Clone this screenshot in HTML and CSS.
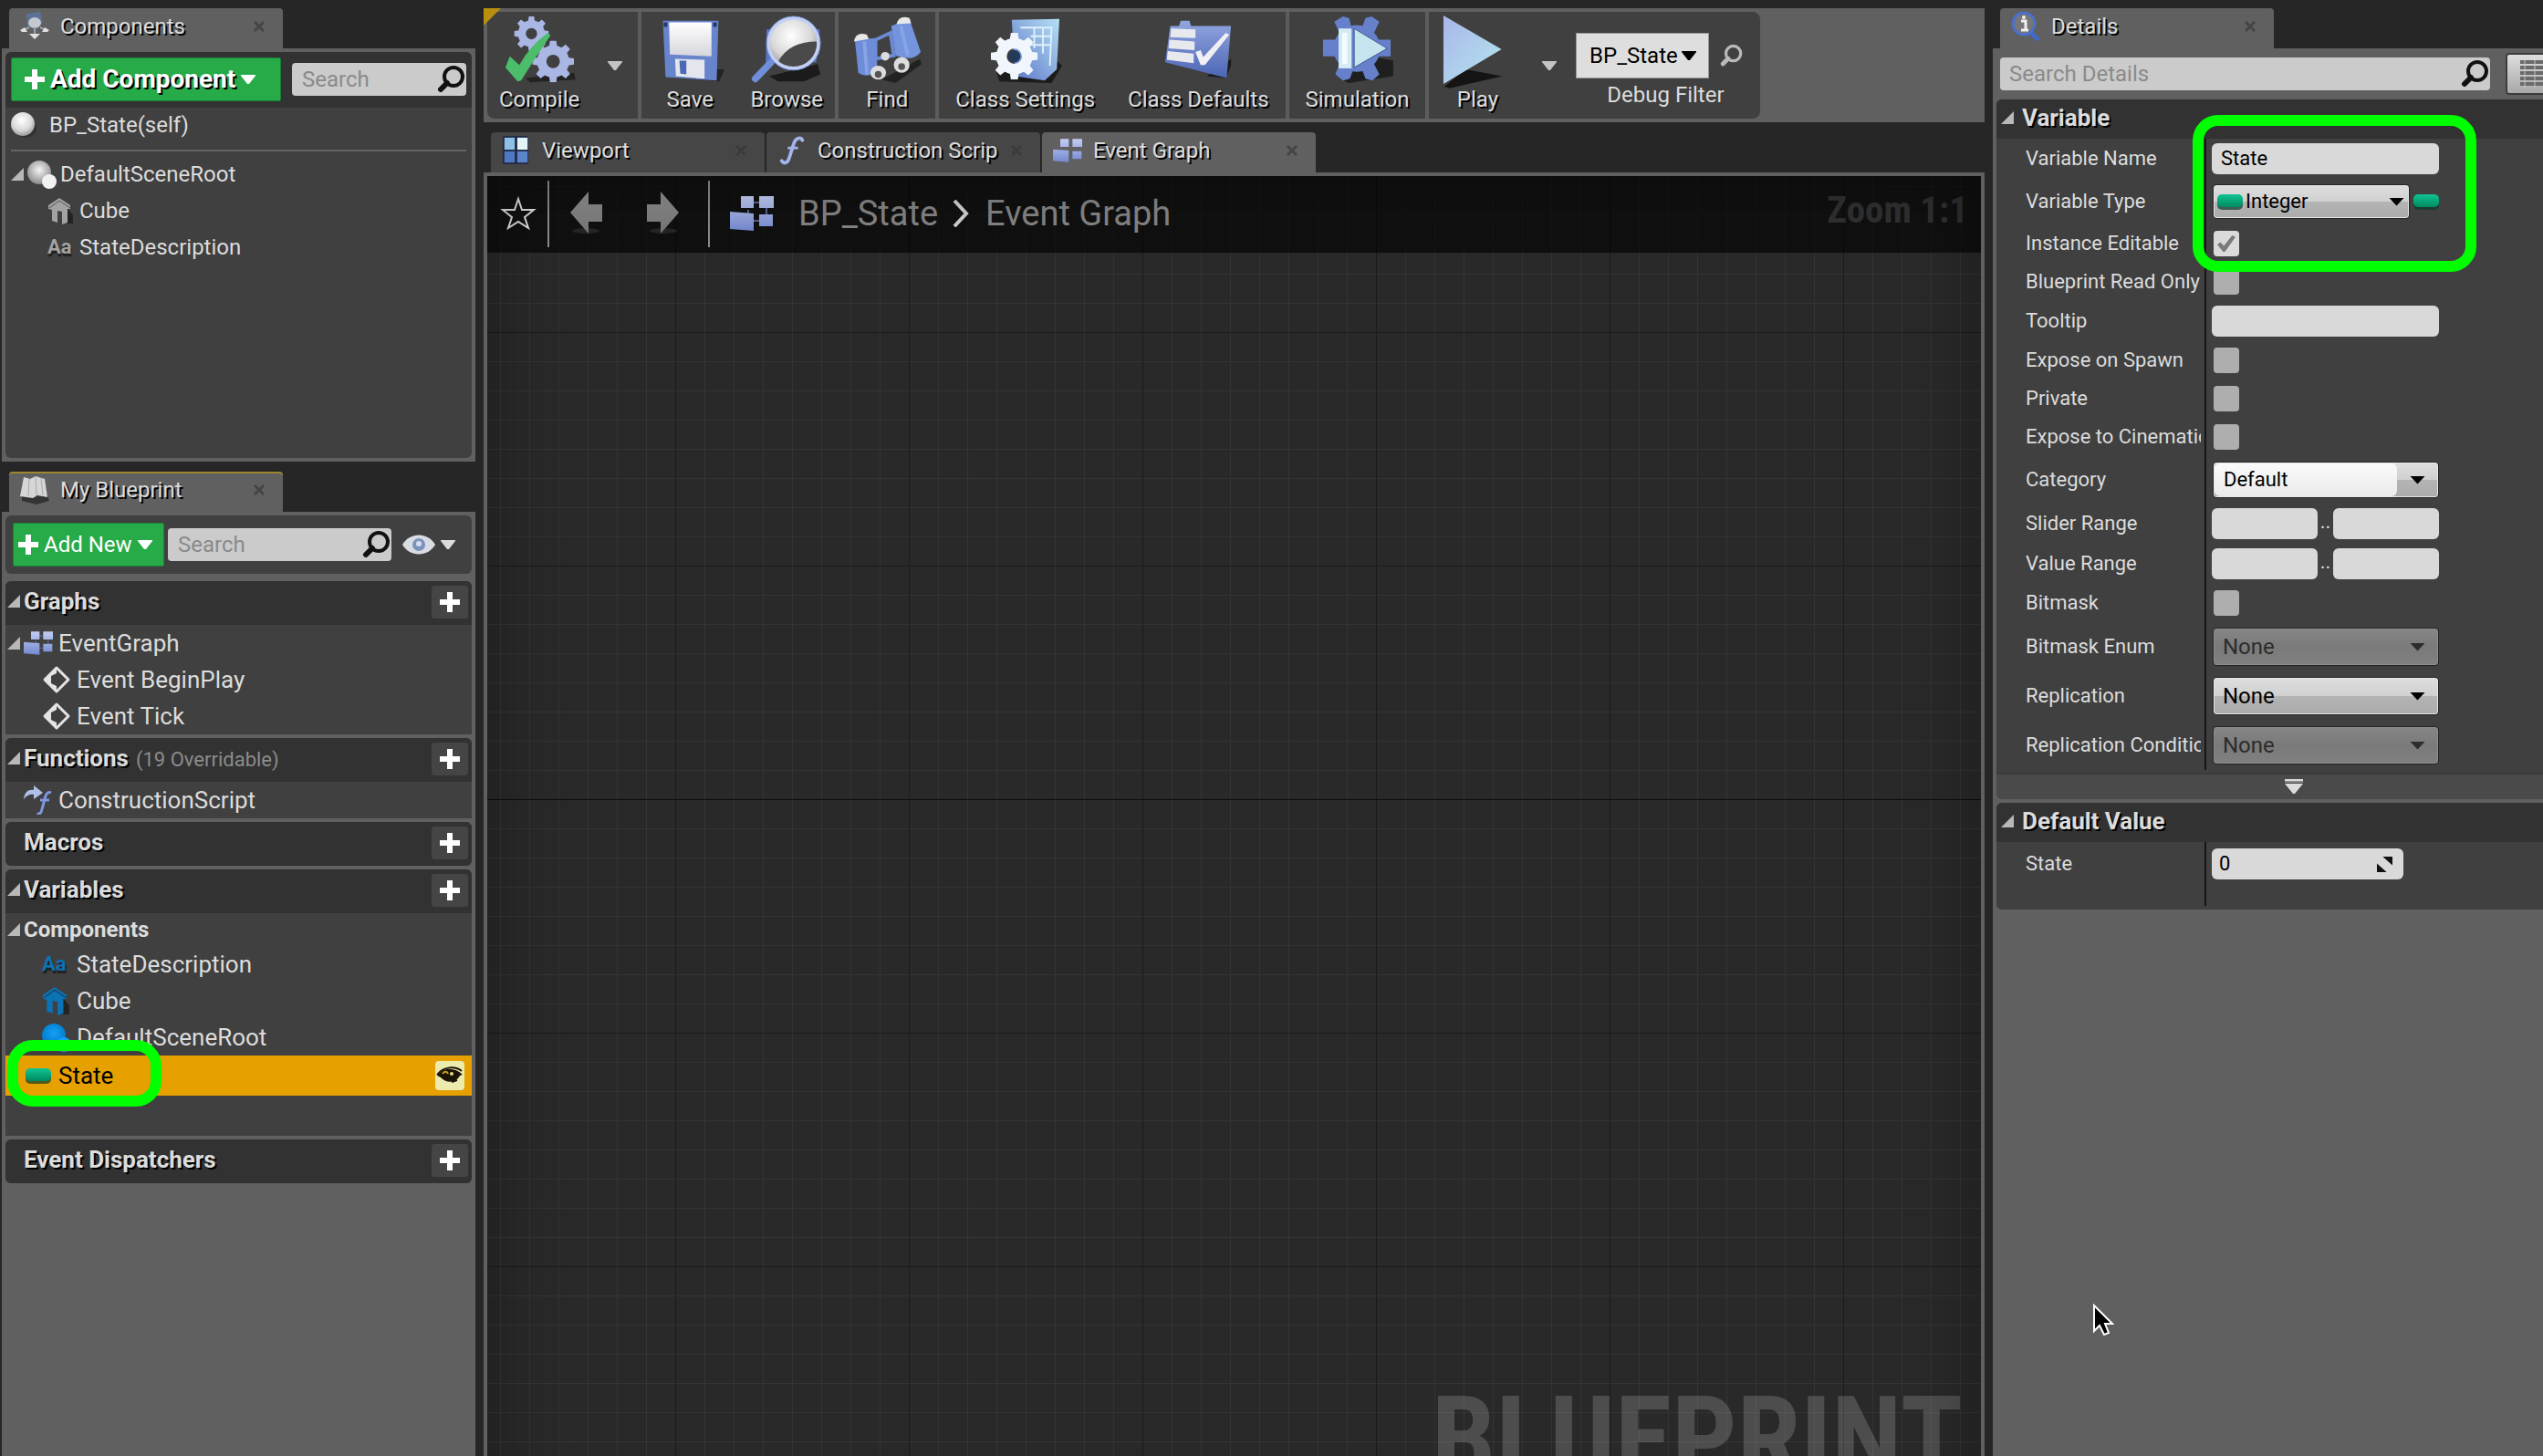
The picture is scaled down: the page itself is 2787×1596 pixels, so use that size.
FILE: index.html
```html
<!DOCTYPE html>
<html lang="en">
<head>
<meta charset="utf-8">
<title>BP_State - Blueprint Editor</title>
<link rel="stylesheet" href="styles.css">
</head>
<body>
<svg class="defs" aria-hidden="true">
  <defs>
    <linearGradient id="g-blue" x1="0" y1="0" x2="0" y2="1"><stop offset="0" stop-color="#c3cdf3"/><stop offset="1" stop-color="#7488cf"/></linearGradient>
    <linearGradient id="g-deep" x1="0" y1="0" x2="0" y2="1"><stop offset="0" stop-color="#91a5e0"/><stop offset="1" stop-color="#4d66b4"/></linearGradient>
    <linearGradient id="g-cyan" x1="0" y1="1" x2="1" y2="0"><stop offset="0" stop-color="#5b74c8"/><stop offset="1" stop-color="#b5e0f4"/></linearGradient>
    <linearGradient id="g-play" x1="0" y1="0" x2="1" y2="1"><stop offset="0" stop-color="#a9b6ea"/><stop offset="1" stop-color="#b4e6ee"/></linearGradient>
    <linearGradient id="g-white" x1="0" y1="0" x2="0" y2="1"><stop offset="0" stop-color="#ffffff"/><stop offset="1" stop-color="#d5d6dc"/></linearGradient>
    <linearGradient id="g-grey" x1="0" y1="0" x2="0" y2="1"><stop offset="0" stop-color="#8f8f8f"/><stop offset="1" stop-color="#767676"/></linearGradient>
    <linearGradient id="g-pin" x1="0" y1="0" x2="0" y2="1"><stop offset="0" stop-color="#10c492"/><stop offset="1" stop-color="#008a60"/></linearGradient>
    <radialGradient id="g-ball" cx=".45" cy=".35" r=".7"><stop offset="0" stop-color="#ffffff"/><stop offset=".6" stop-color="#d8d8d8"/><stop offset="1" stop-color="#8c8c8c"/></radialGradient>
    <radialGradient id="g-ball2" cx=".5" cy=".4" r=".6"><stop offset="0" stop-color="#f4f4f4"/><stop offset="1" stop-color="#8a8a8a"/></radialGradient>
    <radialGradient id="g-ball3" cx=".5" cy=".4" r=".6"><stop offset="0" stop-color="#14a0f8"/><stop offset="1" stop-color="#0078c4"/></radialGradient>
    <symbol id="i-gear" viewBox="-20 -20 40 40">
      <circle r="11" fill="none" stroke="currentColor" stroke-width="9"/>
      <g fill="currentColor"><path id="tooth" d="M-4-13L-3-20H3L4-13Z"/><use href="#tooth" transform="rotate(45)"/><use href="#tooth" transform="rotate(90)"/><use href="#tooth" transform="rotate(135)"/><use href="#tooth" transform="rotate(180)"/><use href="#tooth" transform="rotate(225)"/><use href="#tooth" transform="rotate(270)"/><use href="#tooth" transform="rotate(315)"/></g>
    </symbol>
    <symbol id="i-search" viewBox="0 0 32 32"><circle cx="18" cy="13" r="10" fill="none" stroke="currentColor" stroke-width="4"/><path d="M11 20L4 27" stroke="currentColor" stroke-width="6" stroke-linecap="round"/></symbol>
    <symbol id="i-plus" viewBox="0 0 22 22"><path d="M8 0h6v8h8v6h-8v8H8v-8H0V8h8z" fill="currentColor"/></symbol>
    <symbol id="i-close" viewBox="0 0 12 12"><path d="M1 1L11 11M11 1L1 11" stroke="#343434" stroke-width="3"/></symbol>
    <symbol id="i-down" viewBox="0 0 16 10"><path d="M0 0H16V1L9 10H7L0 1Z" fill="currentColor"/></symbol>
    <symbol id="i-tri" viewBox="0 0 14 14"><path d="M14 0V14H0Z" fill="#b8b8b8"/></symbol>
    <symbol id="i-graph" viewBox="0 0 48 40"><path d="M14 8H40M40 8V28M20 16V28H40" fill="none" stroke="#56618c" stroke-width="2"/><path d="M12 1H26V14H12ZM32 1H48V14H32ZM0 18L26 20V39L0 37ZM32 21H47V34H32Z" fill="url(#g-blue)"/></symbol>
    <symbol id="i-house" viewBox="0 0 30 30"><path d="M20 10L28 20V29H20Z" fill="#000" opacity=".45"/><path d="M13 1L25 9V13L22 13V28L16 30V16L11 15V28L5 26V14L1 13V9Z" fill="currentColor"/><path d="M2 12L13 4L25 12" fill="none" stroke="#222" stroke-opacity=".6" stroke-width="1"/></symbol>
    <symbol id="i-event" viewBox="0 0 32 32"><path d="M16 3L29 16L16 29L3 16Z" fill="none" stroke="#e4e4e4" stroke-width="3" stroke-linejoin="round"/><path d="M16 3V9L10 12V20L16 23V29L3 16Z" fill="#e4e4e4"/></symbol>
    <symbol id="i-pin" viewBox="0 0 28 18"><rect x="0" y="3" width="28" height="15" rx="5" fill="#0c3a2c" opacity=".7"/><rect x="0" y="1" width="28" height="14" rx="5" fill="url(#g-pin)"/></symbol>
    <symbol id="i-arrow" viewBox="0 0 36 48"><ellipse cx="18" cy="43" rx="15" ry="3" fill="#333" opacity=".6"/><path d="M0 14H15V0L35 23L15 46V33H0Z" fill="url(#g-grey)"/></symbol>
    <symbol id="i-func" viewBox="0 0 28 34"><path d="M26 5C24 1 18 2 16 9L11 25C9 32 5 33 2 29" fill="none" stroke="#a3b4ea" stroke-width="4" stroke-linecap="round"/><path d="M9 14H21" stroke="#a3b4ea" stroke-width="3"/></symbol>
    <symbol id="i-eye" viewBox="0 0 36 22"><path d="M0 11C8-3 28-3 36 11C28 25 8 25 0 11Z" fill="#d9dce3"/><circle cx="18" cy="11" r="7" fill="#7d93bd"/><circle cx="18" cy="10" r="3" fill="#d5def0"/></symbol>
  </defs>
</svg>

<div class="editor">
  <aside class="side">
    <section class="dock dock-components">
      <div class="tabs">
        <div class="tab active">
          <svg class="tab-icon" viewBox="0 0 32 32"><path d="M7 2L22 0L25 12L18 18L8 16Z" fill="#5b7195"/><ellipse cx="16" cy="12" rx="7" ry="6" fill="#c4c8cf"/><path d="M4 20L10 17M28 20L22 17M16 17V26" stroke="#9aa0ab" stroke-width="2"/><path d="M0 20L5 17L8 22L2 22ZM32 20L27 17L24 22L30 22ZM10 24H22L16 30Z" fill="#e0e0e0"/></svg>
          <span class="tab-text">Components</span>
          <svg class="tab-close"><use href="#i-close"/></svg>
        </div>
      </div>
      <div class="panel">
        <div class="comp-bar">
          <button class="green big"><svg class="plus"><use href="#i-plus"/></svg>Add Component<svg class="down"><use href="#i-down"/></svg></button>
          <label class="search"><input type="text" placeholder="Search" aria-label="Search components"><svg class="glass"><use href="#i-search"/></svg></label>
        </div>
        <div class="comp-tree">
          <div class="self-row"><svg class="ico30" viewBox="0 0 30 30"><ellipse cx="16" cy="19" rx="12" ry="10" fill="#222" opacity=".5"/><circle cx="13" cy="14" r="13" fill="url(#g-ball)"/></svg>BP_State(self)</div>
          <div class="rule"></div>
          <div class="row root"><svg class="tri"><use href="#i-tri"/></svg><svg class="ico32" viewBox="0 0 32 32"><circle cx="13" cy="14" r="13" fill="url(#g-ball2)"/><circle cx="24" cy="24" r="8" fill="#f2f2f2"/></svg>DefaultSceneRoot</div>
          <div class="row leaf"><svg class="ico30 grey"><use href="#i-house"/></svg>Cube</div>
          <div class="row leaf"><span class="aa grey">Aa</span>StateDescription</div>
        </div>
      </div>
    </section>

    <section class="dock dock-blueprint">
      <div class="tabs">
        <div class="tab active focused">
          <svg class="tab-icon" viewBox="0 0 32 32"><path d="M2 22L30 22L32 28L18 32L2 28Z" fill="#222" opacity=".7"/><path d="M4 2L11 4L17 1L27 4L30 24L19 22L14 25L0 23Z" fill="#d6d6d6"/><path d="M10 4L9 23M17 2L18 22M23 3L25 22" stroke="#a8a8a8" stroke-width="1"/></svg>
          <span class="tab-text">My Blueprint</span>
          <svg class="tab-close"><use href="#i-close"/></svg>
        </div>
      </div>
      <div class="panel list">
        <div class="bp-bar">
          <button class="green"><svg class="plus"><use href="#i-plus"/></svg>Add New<svg class="down"><use href="#i-down"/></svg></button>
          <label class="search"><input type="text" placeholder="Search" aria-label="Search blueprint"><svg class="glass"><use href="#i-search"/></svg></label>
          <button class="plain" aria-label="View options"><svg class="eye"><use href="#i-eye"/></svg><svg class="down"><use href="#i-down"/></svg></button>
        </div>

        <div class="group">
          <h2 class="group-head"><svg class="tri"><use href="#i-tri"/></svg>Graphs<button class="add" aria-label="Add graph"><svg class="plus"><use href="#i-plus"/></svg></button></h2>
          <div class="row l1"><svg class="tri"><use href="#i-tri"/></svg><svg class="ico32 gicon"><use href="#i-graph"/></svg>EventGraph</div>
          <div class="row l2"><svg class="ico32"><use href="#i-event"/></svg>Event BeginPlay</div>
          <div class="row l2"><svg class="ico32"><use href="#i-event"/></svg>Event Tick</div>
        </div>
        <div class="group">
          <h2 class="group-head"><svg class="tri"><use href="#i-tri"/></svg>Functions<small>(19 Overridable)</small><button class="add" aria-label="Add function"><svg class="plus"><use href="#i-plus"/></svg></button></h2>
          <div class="row l1"><svg class="ico32 after-tri" viewBox="0 0 32 32"><path d="M0 15C1 6 6 4 11 5V0L21 8L11 15V10C7 9 3 11 0 15Z" fill="#b0bfe8"/><path d="M30 8C26 6 24 10 23 15L20 26C19 31 17 32 15 30M18 16H28" fill="none" stroke="#7f98dd" stroke-width="3"/></svg>ConstructionScript</div>
        </div>
        <div class="group closed">
          <h2 class="group-head"><span class="no-tri"></span>Macros<button class="add" aria-label="Add macro"><svg class="plus"><use href="#i-plus"/></svg></button></h2>
        </div>
        <div class="group">
          <h2 class="group-head"><svg class="tri"><use href="#i-tri"/></svg>Variables<button class="add" aria-label="Add variable"><svg class="plus"><use href="#i-plus"/></svg></button></h2>
          <h3 class="sub-head"><svg class="tri"><use href="#i-tri"/></svg>Components</h3>
          <div class="row l2"><span class="aa blue">Aa</span>StateDescription</div>
          <div class="row l2"><svg class="ico32 blue"><use href="#i-house"/></svg>Cube</div>
          <div class="row l2"><svg class="ico32" viewBox="0 0 32 32"><circle cx="13" cy="14" r="13" fill="url(#g-ball3)"/><circle cx="24" cy="24" r="8" fill="#12a0f8"/></svg>DefaultSceneRoot</div>
          <div class="row selected"><svg class="pin"><use href="#i-pin"/></svg>State
            <button class="expose" aria-label="Instance editable"><svg viewBox="0 0 32 32"><path d="M2 16C8 7 21 6 30 15L27 16C23 24 12 25 6 18Z" fill="#1a1306"/><path d="M8 14C10 11 13 11 14 14" stroke="#caa024" stroke-width="2" fill="none"/><circle cx="18" cy="14" r="2" fill="#e8dd8a"/><path d="M18 23L24 21M2 15C9 6 22 5 29 11" stroke="#1a1306" stroke-width="2" fill="none"/></svg></button>
            <span class="mark mark-state"></span>
          </div>
          <div class="blank"></div>
        </div>
        <div class="group closed">
          <h2 class="group-head"><span class="no-tri"></span>Event Dispatchers<button class="add" aria-label="Add event dispatcher"><svg class="plus"><use href="#i-plus"/></svg></button></h2>
        </div>
      </div>
    </section>
  </aside>

  <main class="center">
    <div class="toolbar-frame">
      <span class="corner"></span>
      <div class="toolbar">
        <div class="tool-set">
          <button class="tool first"><svg viewBox="0 0 80 80"><path d="M24 72L80 66L82 74L30 77Z" fill="#1c1c1c" opacity=".8"/><g fill="#aab6e4" color="#aab6e4"><use href="#i-gear" x="11" y="1" width="40" height="40"/><use href="#i-gear" x="32" y="29" width="48" height="48"/></g><path d="M1 60L6 47L17 57Q30 34 50 20L53 23Q36 48 19 75L15 76Z" fill="#4bbd6b"/></svg>Compile</button>
          <button class="caret" aria-label="Compile options"><svg class="down"><use href="#i-down"/></svg></button>
        </div>
        <div class="tool-set">
          <button class="tool"><svg viewBox="0 0 80 80"><path d="M12 70L72 62L80 62L74 76Z" fill="#1c1c1c" opacity=".8"/><path d="M9 6H73L71 75L12 71Z" fill="#6784cc"/><path d="M16 8H65V47L17 45Z" fill="url(#g-white)"/><path d="M23 50L57 51V73L24 70Z" fill="#e4e6ee"/><path d="M28 52H36V68L29 67Z" fill="#4c69b5"/><rect x="10" y="8" width="4" height="5" fill="#26375f"/><rect x="67" y="8" width="4" height="5" fill="#26375f"/></svg>Save</button>
          <button class="tool"><svg viewBox="0 0 80 80"><path d="M20 70L76 56L79 68L60 76L30 76Z" fill="#111" opacity=".8"/><path d="M17 16H78V30L74 54H16Z" fill="#5a76c4"/><path d="M22 54L4 73" stroke="#6f8fda" stroke-width="8" stroke-linecap="round"/><circle cx="48" cy="32" r="28" fill="url(#g-ball)"/><path d="M30 54Q42 30 75 30A28 28 0 0 1 30 54Z" fill="#4a4a4a"/><circle cx="48" cy="32" r="29" fill="none" stroke="#c3d0f4" stroke-width="4"/><circle cx="48" cy="32" r="31" fill="none" stroke="#7c98e0" stroke-width="1"/></svg>Browse</button>
        </div>
        <div class="tool-set">
          <button class="tool"><svg viewBox="0 0 80 80"><path d="M34 74L78 50L80 56L50 78Z" fill="#161616" opacity=".7"/><path d="M27 28L44 20L48 46L27 50Z" fill="none" stroke="#6c8bd6" stroke-width="4"/><path d="M3 28L27 26L29 62Q18 74 7 66Z" fill="#6e8dd9"/><path d="M45 12L66 4L79 42Q70 54 50 46Z" fill="#7494de"/><path d="M14 30L17 68M56 12L64 46" stroke="#88a4e6" stroke-width="4"/><path d="M2 30Q4 18 17 22L19 27Z" fill="#e8e8e8"/><path d="M51 10Q54-1 66 3L68 9Z" fill="#e8e8e8"/><circle cx="38" cy="47" r="5" fill="#dcdcdc"/><ellipse cx="30" cy="66" rx="9" ry="8" fill="#ddd"/><circle cx="30" cy="68" r="4" fill="#555"/><ellipse cx="57" cy="57" rx="9" ry="9" fill="#ddd"/><circle cx="57" cy="59" r="4" fill="#555"/></svg>Find</button>
        </div>
        <div class="tool-set">
          <button class="tool wide"><svg viewBox="0 0 80 80"><path d="M6 64L76 52L82 58L70 78L10 76Z" fill="#111" opacity=".8"/><path d="M24 5L79 4L76 62L62 75L28 70Z" fill="url(#g-cyan)"/><path d="M34 14H70L68 58M46 24H70M46 34H69M50 14V38M60 14V44" fill="none" stroke="#dff0fb" stroke-width="2"/><g color="#f0f6fb"><use href="#i-gear" x="0" y="20" width="54" height="54"/></g><circle cx="27" cy="47" r="7" fill="#253a57"/></svg>Class Settings</button>
          <button class="tool wide"><svg viewBox="0 0 80 80"><path d="M50 70L78 50L78 58L72 72Z" fill="#111" opacity=".8"/><path d="M18 12L20 6H30L32 12L78 12L73 72L2 54L8 12Z" fill="url(#g-deep)"/><path d="M9 15L37 16V26L8 25ZM7 28L36 30V40L6 38ZM5 41L35 44V55L4 51Z" fill="#e8e9ee"/><path d="M37 42L43 40L46 48L72 20L76 22L48 57L43 57Z" fill="#f0f0f4"/></svg>Class Defaults</button>
        </div>
        <div class="tool-set">
          <button class="tool wide"><svg viewBox="0 0 80 80"><path d="M14 68L60 48L82 52V70L30 78Z" fill="#161616" opacity=".8"/><g fill="#6680cb"><circle cx="40" cy="38" r="27"/><path d="M22 24L14 7L24 1L31 3L34 14ZM46 14L50 3L57 1L66 7L58 24ZM16 28H1V47H16ZM64 28H79V47H64ZM22 52L15 68L24 75L32 73L36 62ZM58 52L66 68L58 75L50 73L46 62Z"/></g><rect x="19" y="15" width="15" height="46" fill="#d3ecf4"/><rect x="23" y="20" width="6" height="36" fill="#f4fcff"/><path d="M37 15L75 38L37 60Z" fill="#c5e4ee" stroke="#3c548f" stroke-width="1"/></svg>Simulation</button>
        </div>
        <div class="tool-set">
          <button class="tool"><svg viewBox="0 0 80 80"><path d="M2 82L26 62L69 70L8 84Z" fill="#141414"/><path d="M1 0L68 39L1 79Z" fill="url(#g-play)"/></svg>Play</button>
          <button class="caret" aria-label="Play options"><svg class="down"><use href="#i-down"/></svg></button>
          <div class="debug">
            <div class="debug-row">
              <button class="debug-pick" id="debug-pick">BP_State<svg class="down"><use href="#i-down"/></svg></button>
              <button class="plain" aria-label="Locate debug object"><svg class="glass small"><use href="#i-search"/></svg></button>
            </div>
            <label for="debug-pick">Debug Filter</label>
          </div>
        </div>
      </div>
    </div>

    <div class="tabs graph-tabs">
      <div class="tab"><svg class="tab-icon" viewBox="0 0 32 34"><rect width="30" height="33" rx="2" fill="#1f2a44"/><rect x="2" y="2" width="12" height="14" fill="#8fc0e6"/><rect x="17" y="2" width="12" height="14" fill="#e2f4f8"/><rect x="2" y="18" width="12" height="13" fill="#5079c4"/><rect x="17" y="18" width="12" height="13" fill="#5c84cc"/></svg><span class="tab-text">Viewport</span><svg class="tab-close"><use href="#i-close"/></svg></div>
      <div class="tab"><svg class="tab-icon"><use href="#i-func"/></svg><span class="tab-text">Construction Scrip</span><svg class="tab-close"><use href="#i-close"/></svg></div>
      <div class="tab active"><svg class="tab-icon"><use href="#i-graph"/></svg><span class="tab-text">Event Graph</span><svg class="tab-close"><use href="#i-close"/></svg></div>
    </div>

    <div class="graph">
      <div class="crumbs">
        <button class="plain star" aria-label="Favorite"><svg viewBox="0 0 40 38"><path d="M20 3L24 15L37 15L27 23L31 35L20 28L9 35L13 23L3 15L16 15Z" fill="none" stroke="#e0e0e0" stroke-width="2"/></svg></button>
        <span class="bar"></span>
        <button class="plain nav" aria-label="Back"><svg class="back"><use href="#i-arrow"/></svg></button>
        <button class="plain nav" aria-label="Forward"><svg><use href="#i-arrow"/></svg></button>
        <span class="bar"></span>
        <svg class="crumb-icon"><use href="#i-graph"/></svg>
        <a href="#" class="crumb">BP_State</a>
        <svg class="chev" viewBox="0 0 18 30"><path d="M2 1L15 15L2 29" fill="none" stroke="#d0d0d0" stroke-width="4"/></svg>
        <a href="#" class="crumb">Event Graph</a>
        <span class="zoom">Zoom 1:1</span>
      </div>
      <div class="watermark">BLUEPRINT</div>
    </div>
  </main>

  <aside class="details">
    <div class="tabs">
      <div class="tab active"><svg class="tab-icon" viewBox="0 0 32 32"><path d="M19 20L30 31" stroke="#4169c8" stroke-width="5"/><circle cx="14" cy="13" r="12" fill="#777" stroke="#4a70cc" stroke-width="3"/><path d="M11 10H16V19M11 20H19" stroke="#f0f0f0" stroke-width="3" fill="none"/><circle cx="14" cy="6" r="2" fill="#f0f0f0"/></svg><span class="tab-text">Details</span><svg class="tab-close"><use href="#i-close"/></svg></div>
      <span class="parent">Parent class:</span>
    </div>
    <div class="details-panel">
      <div class="details-bar">
        <label class="search"><input type="text" placeholder="Search Details" aria-label="Search Details"><svg class="glass"><use href="#i-search"/></svg></label>
        <button class="matrix" aria-label="Property matrix"><svg viewBox="0 0 44 30"><path d="M0 2H44M0 8H44M0 14H44M0 20H44M0 26H44" stroke="#6a6a6a" stroke-width="4"/><path d="M5 0V30M16 0V30M27 0V30M38 0V30" stroke="#c4c4c4" stroke-width="1"/></svg></button>
      </div>

      <div class="category">
        <h2 class="cat-head"><svg class="tri"><use href="#i-tri"/></svg>Variable</h2>
        <div class="props">
          <div class="prop text"><label for="p-name">Variable Name</label><div class="val"><input id="p-name" class="field" type="text" value="State"></div></div>
          <div class="prop type"><label for="p-type">Variable Type</label><div class="val"><div class="pick pick-type"><svg class="pin"><use href="#i-pin"/></svg><select id="p-type"><option>Integer</option></select></div><button class="plain" aria-label="Container type"><svg class="pin"><use href="#i-pin"/></svg></button></div></div>
          <div class="prop"><label for="p-inst">Instance Editable</label><div class="val"><input id="p-inst" type="checkbox" checked></div></div>
          <div class="prop"><label for="p-ro">Blueprint Read Only</label><div class="val"><input id="p-ro" type="checkbox"></div></div>
          <div class="prop text"><label for="p-tip">Tooltip</label><div class="val"><input id="p-tip" class="field" type="text"></div></div>
          <div class="prop"><label for="p-spawn">Expose on Spawn</label><div class="val"><input id="p-spawn" type="checkbox"></div></div>
          <div class="prop"><label for="p-priv">Private</label><div class="val"><input id="p-priv" type="checkbox"></div></div>
          <div class="prop"><label for="p-cine">Expose to Cinematics</label><div class="val"><input id="p-cine" type="checkbox"></div></div>
          <div class="prop category-row"><label for="p-cat">Category</label><div class="val"><div class="pick pick-cat"><select id="p-cat"><option>Default</option></select></div></div></div>
          <div class="prop text"><label for="p-smin">Slider Range</label><div class="val"><input id="p-smin" class="field half" type="text"><span class="dots">..</span><input class="field half" type="text" aria-label="Slider maximum"></div></div>
          <div class="prop text"><label for="p-vmin">Value Range</label><div class="val"><input id="p-vmin" class="field half" type="text"><span class="dots">..</span><input class="field half" type="text" aria-label="Value maximum"></div></div>
          <div class="prop"><label for="p-bit">Bitmask</label><div class="val"><input id="p-bit" type="checkbox"></div></div>
          <div class="prop combo"><label for="p-enum">Bitmask Enum</label><div class="val"><div class="pick"><select id="p-enum" disabled><option>None</option></select></div></div></div>
          <div class="prop combo"><label for="p-rep">Replication</label><div class="val"><div class="pick"><select id="p-rep"><option>None</option></select></div></div></div>
          <div class="prop combo"><label for="p-cond">Replication Condition</label><div class="val"><div class="pick"><select id="p-cond" disabled><option>None</option></select></div></div></div>
        </div>
        <button class="expander" aria-label="Show advanced"><svg viewBox="0 0 20 16"><path d="M0 0H20V2H0ZM0 5H20L11 16H9Z" fill="#dcdcdc"/><path d="M0 3H20" stroke="#888" stroke-width="2"/></svg></button>
        <span class="mark mark-variable"></span>
      </div>

      <div class="category">
        <h2 class="cat-head"><svg class="tri"><use href="#i-tri"/></svg>Default Value</h2>
        <div class="props tail">
          <div class="prop"><label for="p-val">State</label><div class="val"><div class="spin"><input id="p-val" class="field" type="text" value="0"><svg viewBox="0 0 16 16"><path d="M6 0H16V9ZM0 7V16H10Z" fill="#111"/></svg></div></div></div>
        </div>
      </div>
      <svg class="cursor" viewBox="0 0 24 36"><path d="M2 2V30L8 24L13 34L18 32L14 22H22Z" fill="#000" stroke="#fff" stroke-width="2"/></svg>
    </div>
  </aside>
</div>
</body>
</html>
```

FILE: styles.css
```css
* { box-sizing: border-box; }

body {
  margin: 0;
  background: #262626;
  color: #dcdcdc;
  font: 24px/28px Roboto, "Liberation Sans", sans-serif;
}

h2, h3 { margin: 0; font-size: 26px; line-height: 28px; font-weight: 700; }
h3 { font-size: 24px; }
svg { display: block; flex: none; }
button, input, select { font: inherit; color: inherit; margin: 0; }
button { border: 0; padding: 0; background: none; cursor: pointer; }
a { color: inherit; text-decoration: none; }
.defs { position: absolute; width: 0; height: 0; }

.editor {
  display: grid;
  grid-template-columns: 519px minmax(0, 1fr) 603px;
  gap: 9px;
  height: 100vh;
  padding-left: 2px;
  overflow: hidden;
}

/* Tabs */
.tabs { display: flex; gap: 2px; padding: 9px 8px 0; }
.tab {
  display: flex;
  align-items: center;
  width: 300px;
  height: 44px;
  padding: 0 20px 4px 12px;
  border-radius: 4px 4px 0 0;
  background: #464646;
  text-shadow: 2px 2px 0 #000;
}
.tab.active { background: #606060; }
.tab.focused { box-shadow: inset 0 2px 0 #9c8630; }
.tab-icon { width: 32px; height: 32px; margin-right: 12px; }
.tab-text { flex: 1; white-space: nowrap; }
.tab-close { width: 12px; height: 12px; opacity: .6; }

/* Left column */
.side { display: flex; flex-direction: column; min-height: 0; }
.dock { display: flex; flex-direction: column; }
.dock-components { height: 508px; padding-bottom: 2px; flex: none; }
.dock-blueprint { flex: 1; }
.panel { flex: 1; padding: 4px; background: #606060; }

.comp-bar {
  display: flex;
  align-items: center;
  gap: 12px;
  height: 61px;
  padding: 0 6px 2px;
  background: #323232;
  border-radius: 6px 6px 0 0;
}
.comp-tree { height: 384px; background: #404040; border-radius: 0 0 6px 6px; }

.green {
  display: flex;
  align-items: center;
  gap: 6px;
  width: 166px;
  height: 48px;
  padding-left: 5px;
  border: 1px solid #1b7f37;
  border-radius: 2px;
  background: #27ab49;
  color: #fff;
}
.green.big { width: 296px; padding-left: 14px; font-size: 28px; font-weight: 700; text-shadow: 2px 2px 0 #000; }
.plus { width: 22px; height: 22px; color: #fff; }
.down { width: 16px; height: 10px; }

.search {
  display: flex;
  align-items: center;
  flex: 1;
  min-width: 0;
  height: 36px;
  padding-left: 11px;
  border-radius: 4px;
  background: #cbcbcb;
  color: #111;
}
.search input { flex: 1; min-width: 0; border: 0; padding: 0; background: none; outline: 0; }
.search input::placeholder { color: #8a8a8a; opacity: 1; }
.details-bar .search { padding-left: 10px; }
.glass { width: 32px; height: 32px; }

.self-row { display: flex; align-items: center; gap: 12px; height: 38px; padding-left: 6px; }
.rule { height: 2px; margin: 8px 6px 5px; background: #646464; }
.row { display: flex; align-items: center; height: 40px; }
.list .row { font-size: 26px; }
.tri { width: 14px; height: 14px; }
.ico30 { width: 30px; height: 30px; }
.ico32 { width: 32px; height: 32px; }
.root { padding-left: 6px; }
.root .ico32 { margin: 0 4px; }
.leaf { padding-left: 46px; }
.leaf .ico30, .leaf .aa { margin-right: 5px; }
.grey { color: #a2a2a2; }
.blue { color: #0b72b4; }
.aa { width: 30px; font-size: 22px; font-weight: 700; text-shadow: 1px 3px 1px #1c1c1c; }

.bp-bar {
  display: flex;
  align-items: center;
  gap: 4px;
  height: 64px;
  margin-bottom: 8px;
  padding: 0 18px 0 8px;
  border-radius: 6px;
  background: #404040;
}
.plain { display: flex; align-items: center; }
.bp-bar .plain { gap: 6px; margin-left: 8px; }
.eye { width: 36px; height: 22px; }

.group { margin-bottom: 4px; background: #404040; border-radius: 6px 6px 0 0; }
.group.closed { border-radius: 6px; }
.group-head {
  display: flex;
  align-items: center;
  height: 48px;
  padding: 0 4px 4px 2px;
  border-radius: inherit;
  background: #323232;
  text-shadow: 2px 2px 0 #000;
}
.group-head .tri, .sub-head .tri { margin-right: 4px; }
.no-tri { width: 18px; }
.group-head small { margin: 4px 0 0 8px; font-size: 22px; font-weight: 400; color: #8c8c8c; text-shadow: none; }
.add {
  display: grid;
  place-items: center;
  width: 40px;
  height: 36px;
  margin: 2px 0 0 auto;
  border-radius: 3px;
  background: #454545;
}
.sub-head { display: flex; align-items: center; height: 36px; padding-left: 2px; }
.l1 { padding-left: 2px; }
.l1 .ico32 { margin: 0 6px 0 4px; }
.l1 .after-tri { margin-left: 18px; }
.l2 { padding-left: 40px; }
.l2 .ico32, .l2 .aa { width: 32px; margin-right: 6px; }
.pin { width: 28px; height: 18px; }
.selected {
  position: relative;
  height: 44px;
  padding: 0 8px 0 22px;
  background: #e6a000;
  color: #000;
}
.selected .pin { margin-right: 8px; }
.expose { width: 32px; height: 32px; margin-left: auto; border-radius: 4px; background: #ecebad; }
.blank { height: 44px; }

.mark { position: absolute; border: 12px solid #00ff00; border-radius: 28px; pointer-events: none; }
.mark-state { left: 2px; top: -17px; width: 169px; height: 73px; }
.mark-variable { left: 215px; top: 17px; width: 311px; height: 172px; }

/* Toolbar */
.center { display: flex; flex-direction: column; min-width: 0; min-height: 0; }
.toolbar-frame { position: relative; display: flex; margin-top: 9px; padding: 4px; background: #606060; }
.corner {
  position: absolute;
  left: 0;
  top: 0;
  width: 19px;
  height: 19px;
  background: #b8900f;
  clip-path: polygon(0 0, 100% 0, 0 100%);
}
.toolbar { display: flex; height: 117px; padding-right: 6px; border-radius: 8px; background: #404040; }
.tool-set { display: flex; }
.tool-set + .tool-set { border-left: 4px solid #5c5c5c; }
.tool {
  display: flex;
  flex-direction: column;
  align-items: center;
  gap: 2px;
  min-width: 106px;
  padding: 4px 12px 0;
  white-space: nowrap;
  text-shadow: 2px 2px 0 #000;
}
.tool.first { padding: 4px 13px 0; }
.tool.wide { padding: 4px 18px 0; }
.tool svg { width: 76px; height: 76px; overflow: visible; }
.caret { display: grid; place-items: center; width: 51px; padding-top: 1px; color: #c4c4c4; }
.debug { display: flex; flex-direction: column; width: 196px; margin-left: 4px; padding-top: 23px; }
.debug-row { display: flex; align-items: center; gap: 12px; margin-bottom: 4px; }
.debug-pick {
  display: flex;
  align-items: center;
  justify-content: center;
  gap: 4px;
  width: 146px;
  height: 50px;
  border: 1px solid #9a9a9a;
  background: #dedede;
  color: #000;
}
.glass.small { width: 26px; height: 26px; color: #bababa; }
.debug label { text-align: center; }

.graph-tabs { padding-top: 11px; }

/* Graph canvas */
.graph {
  position: relative;
  flex: 1;
  border: 4px solid #606060;
  border-bottom: 0;
  overflow: hidden;
  background-color: #292929;
  background-image:
    linear-gradient(#0c0c0c 1px, transparent 1px),
    linear-gradient(90deg, #1b1b1b 1px, transparent 1px),
    linear-gradient(#1b1b1b 1px, transparent 1px),
    linear-gradient(90deg, #343434 1px, transparent 1px),
    linear-gradient(#343434 1px, transparent 1px);
  background-size: 100% 2000px, 256px 256px, 256px 256px, 32px 32px, 32px 32px;
  background-position: 0 683px, 206px 171px, 206px 171px, 14px 11px, 14px 11px;
}
.graph::after {
  content: "";
  position: absolute;
  inset: 0 0 -80px;
  box-shadow: inset 0 0 80px rgba(0, 0, 0, .35);
  pointer-events: none;
}
.crumbs {
  display: flex;
  align-items: center;
  height: 84px;
  padding: 0 14px 2px;
  background: rgba(0, 0, 0, .6);
  color: #848484;
  font-size: 38px;
  line-height: 44px;
}
.star svg { width: 40px; height: 38px; }
.bar { width: 2px; height: 73px; margin: 0 22px 0 12px; background: #8a8a8a; }
.nav svg { width: 36px; height: 48px; }
.nav { margin-right: 49px; }
.nav .back { transform: scaleX(-1); }
.nav + .bar { margin: 0 22px 0 -18px; }
.crumb-icon { width: 48px; height: 40px; margin-right: 27px; }
.chev { width: 18px; height: 30px; margin: 0 18px 0 16px; }
.zoom, .watermark { font-family: "Roboto Condensed", "Liberation Sans Narrow", Roboto, sans-serif; font-weight: 700; }
.zoom { margin: 0 0 8px auto; font-size: 41px; color: #303030; }
.watermark {
  position: absolute;
  right: 20px;
  bottom: -56px;
  font-size: 126px;
  line-height: 150px;
  color: rgba(255, 255, 255, .17);
}

/* Details */
.details { display: flex; flex-direction: column; min-width: 0; overflow: hidden; }
.details .tabs { position: relative; }
.parent { position: absolute; left: 468px; top: -22px; color: #000; white-space: nowrap; }
.details-panel { position: relative; flex: 1; padding-left: 4px; background: #606060; }
.details-bar { display: flex; align-items: center; gap: 17px; height: 56px; padding-left: 4px; }
.matrix {
  display: grid;
  place-items: center start;
  width: 61px;
  height: 46px;
  margin-right: -20px;
  padding-left: 14px;
  border: 2px solid #3c3c3c;
  border-radius: 4px;
  background: linear-gradient(#dedede, #a8a8a8);
}
.matrix svg { width: 44px; height: 30px; }

.category { position: relative; margin-bottom: 4px; background: #404040; border-radius: 6px 0 0 6px; }
.cat-head {
  display: flex;
  align-items: center;
  gap: 9px;
  height: 43px;
  padding: 0 0 4px 5px;
  border-radius: 6px 0 0 0;
  background: #323232;
  text-shadow: 2px 2px 0 #000;
}
.props { padding-bottom: 4px; }
.prop { display: grid; grid-template-columns: 228px 1fr; height: 42px; font-size: 22px; }
.prop.text { height: 44px; }
.prop.type { height: 50px; }
.prop.category-row { height: 52px; }
.prop.combo { height: 54px; }
.prop > label {
  align-self: center;
  margin-right: 4px;
  padding-left: 32px;
  overflow: hidden;
  white-space: nowrap;
}
.val { display: flex; align-items: center; padding-left: 6px; border-left: 2px solid #161616; }
.tail .prop { height: 70px; }
.tail .prop > label { margin-bottom: 22px; }
.tail .val { padding-bottom: 22px; }
.field {
  width: 249px;
  height: 34px;
  border: 0;
  border-radius: 6px;
  padding: 0 10px 2px;
  background: #d9d9d9;
  color: #000;
}
.field.half { width: 116px; }
.dots { width: 17px; padding-bottom: 4px; text-align: center; line-height: 20px; }
.spin { display: flex; align-items: center; width: 210px; border-radius: 6px; background: #d9d9d9; }
.spin .field { flex: 1; min-width: 0; padding-left: 8px; background: none; }
.spin svg { width: 17px; height: 17px; margin-right: 12px; }

input[type="checkbox"] {
  appearance: none;
  display: grid;
  place-items: center;
  width: 28px;
  height: 28px;
  margin-left: 2px;
  border-radius: 4px;
  background: #aeaeae;
}
input[type="checkbox"]:checked { background: #dadada; }
input[type="checkbox"]:checked::after {
  content: "";
  width: 20px;
  height: 18px;
  background: #7a7a7a;
  clip-path: polygon(0 55%, 18% 42%, 36% 64%, 82% 0, 100% 10%, 42% 100%, 32% 100%);
}

.pick {
  position: relative;
  display: flex;
  align-items: center;
  width: 248px;
  height: 42px;
  margin-left: 1px;
  border: 1px solid #242424;
  border-radius: 4px;
  background: linear-gradient(#dedede, #d0d0d0 50%, #b4b4b4 50%, #ababab);
  box-shadow: inset 0 0 0 1px #e8e8e8;
  color: #000;
  font-size: 24px;
}
.pick::after {
  content: "";
  position: absolute;
  right: 14px;
  width: 17px;
  height: 9px;
  background: currentColor;
  clip-path: polygon(0 0, 100% 0, 50% 100%);
  pointer-events: none;
}
.pick select { appearance: none; flex: 1; height: 100%; border: 0; padding: 0 10px; background: none; outline: 0; opacity: 1; }
.pick:has(:disabled) { background: linear-gradient(#868686, #7a7a7a 50%, #808080); box-shadow: inset 0 0 0 1px #8f8f8f; color: #2c2c2c; }
.pick-type { width: 216px; height: 38px; margin-right: 4px; padding-left: 4px; font-size: 22px; }
.pick-type::after { right: 5px; }
.pick-type select { padding: 0 3px; }
.pick-cat { height: 40px; font-size: 22px; }
.pick-cat select { flex: 0 0 200px; height: 36px; margin-left: 1px; border-radius: 6px; background: linear-gradient(#fafafa, #eaeaea); }

.expander {
  display: flex;
  align-items: center;
  width: 100%;
  height: 28px;
  padding: 0 0 2px 316px;
  border-top: 1px solid #383838;
  border-radius: 0 0 0 6px;
  background: #4a4a4a;
}
.expander svg { width: 20px; height: 16px; }
.cursor { position: absolute; left: 109px; top: 1376px; width: 24px; height: 36px; }
```
